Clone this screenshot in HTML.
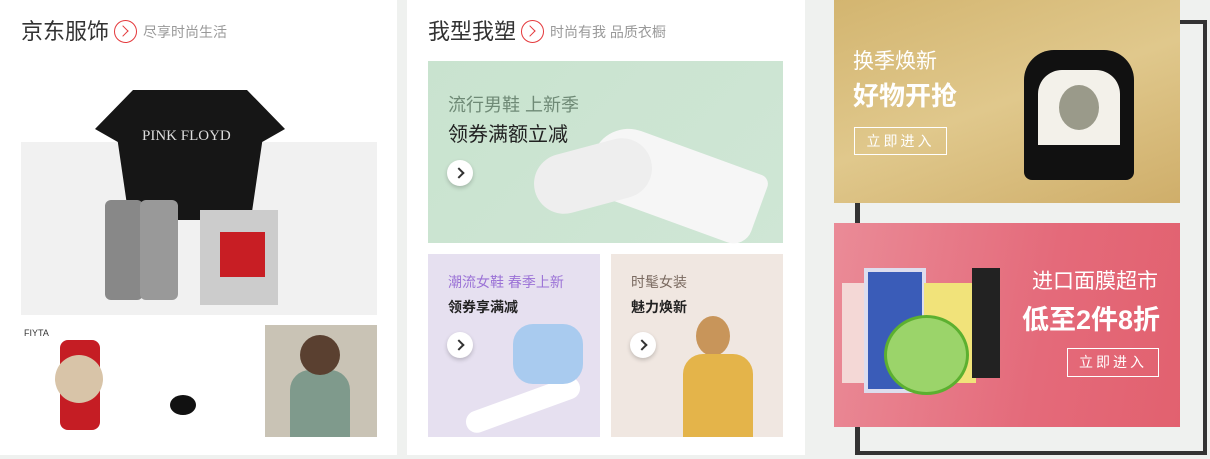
<!DOCTYPE html>
<html><head><meta charset="utf-8"><style>
*{margin:0;padding:0;box-sizing:border-box}
body{width:1210px;height:459px;background:#eff1ef;position:relative;overflow:hidden;font-family:"Liberation Sans","Noto Sans CJK SC",sans-serif}
.a{position:absolute}
.panel{position:absolute;top:0;height:455px;background:#fff}
.t{position:absolute;top:18px;font-size:22px;color:#333;white-space:nowrap;line-height:28px}
.ci{display:inline-block;width:23px;height:23px;border:1.5px solid #e4393c;border-radius:50%;vertical-align:-4px;margin:0 6px 0 5px;position:relative}
.ci:after{content:"";position:absolute;left:4px;top:6px;width:7px;height:7px;border-top:1.5px solid #e4393c;border-right:1.5px solid #e4393c;transform:rotate(45deg)}
.sub{font-size:14px;color:#999;vertical-align:2px}
.arr{position:absolute;width:26px;height:26px;border-radius:50%;background:#fff;box-shadow:0 2px 4px rgba(0,0,0,.2)}
.arr:after{content:"";position:absolute;left:8px;top:9px;width:6px;height:6px;border-top:2px solid #333;border-right:2px solid #333;transform:rotate(45deg)}
.btn{position:absolute;border:1px solid #fff;color:#fff;font-size:14px;letter-spacing:3px;text-align:center}
</style></head><body>
<div class="panel" style="left:0;width:397px">
 <div class="t" style="left:21px">京东服饰<span class="ci"></span><span class="sub">尽享时尚生活</span></div>
 <div class="a" style="left:21px;top:142px;width:356px;height:173px;background:#f1f1f1"></div>
 <div class="a" style="left:95px;top:90px;width:190px;height:130px;background:#161616;clip-path:polygon(20% 0,80% 0,100% 30%,88% 40%,82% 100%,18% 100%,12% 40%,0 30%)"></div>
 <div class="a" style="left:142px;top:128px;color:#ddd;font-family:'Liberation Serif',serif;font-size:15px">PINK FLOYD</div>
 <div class="a" style="left:105px;top:200px;width:38px;height:100px;background:#888;border-radius:6px"></div>
 <div class="a" style="left:140px;top:200px;width:38px;height:100px;background:#999;border-radius:6px"></div>
 <div class="a" style="left:200px;top:210px;width:78px;height:95px;background:#ccc"></div>
 <div class="a" style="left:220px;top:232px;width:45px;height:45px;background:#c81e24"></div>
 <div class="a" style="left:24px;top:328px;font-size:9px;color:#333">FIYTA</div>
 <div class="a" style="left:60px;top:340px;width:40px;height:90px;background:#c51d24;border-radius:8px"></div>
 <div class="a" style="left:55px;top:355px;width:48px;height:48px;background:#d8c4a8;border-radius:50%"></div>
 <div class="a" style="left:170px;top:395px;width:26px;height:20px;background:#111;border-radius:50%"></div>
 <div class="a" style="left:265px;top:325px;width:112px;height:112px;background:#c9c3b5"></div>
 <div class="a" style="left:290px;top:370px;width:60px;height:67px;background:#7f9a8c;border-radius:20px 20px 0 0"></div>
 <div class="a" style="left:300px;top:335px;width:40px;height:40px;background:#5a4030;border-radius:50%"></div>
</div>
<div class="panel" style="left:407px;width:398px">
 <div class="t" style="left:21px">我型我塑<span class="ci"></span><span class="sub">时尚有我 品质衣橱</span></div>
 <div class="a" style="left:21px;top:61px;width:355px;height:182px;background:linear-gradient(135deg,#c9e3cf,#cfe6d5)">
  <div class="a" style="left:20px;top:30px;font-size:18px;color:#6f8a76">流行男鞋 上新季</div>
  <div class="a" style="left:20px;top:57px;font-size:20px;color:#222">领券满额立减</div>
  <div class="arr" style="left:19px;top:99px"></div>
  <div class="a" style="left:160px;top:85px;width:175px;height:75px;background:#f6f6f6;border-radius:40px 10px 20px 40px;transform:rotate(20deg)"></div>
  <div class="a" style="left:105px;top:85px;width:120px;height:60px;background:#eee;border-radius:40px;transform:rotate(-15deg)"></div>
 </div>
 <div class="a" style="left:21px;top:254px;width:172px;height:183px;background:#e6e0f0">
  <div class="a" style="left:20px;top:18px;font-size:14px;color:#9b72d6">潮流女鞋 春季上新</div>
  <div class="a" style="left:20px;top:43px;font-size:14px;font-weight:bold;color:#222">领券享满减</div>
  <div class="arr" style="left:19px;top:78px"></div>
  <div class="a" style="left:35px;top:140px;width:120px;height:22px;background:#fff;border-radius:20px;transform:rotate(-20deg)"></div>
  <div class="a" style="left:85px;top:70px;width:70px;height:60px;background:#a9cbef;border-radius:20px"></div>
 </div>
 <div class="a" style="left:204px;top:254px;width:172px;height:183px;background:#f0e7e1">
  <div class="a" style="left:20px;top:18px;font-size:14px;color:#7a6a60">时髦女装</div>
  <div class="a" style="left:20px;top:43px;font-size:14px;font-weight:bold;color:#222">魅力焕新</div>
  <div class="arr" style="left:19px;top:78px"></div>
  <div class="a" style="left:85px;top:62px;width:34px;height:40px;background:#c8955a;border-radius:50%"></div>
  <div class="a" style="left:72px;top:100px;width:70px;height:83px;background:#e4b44a;border-radius:20px 20px 0 0"></div>
 </div>
</div>
<div class="a" style="left:855px;top:20px;width:352px;height:435px;border:4px solid #333;border-left-width:5px"></div>
<div class="a" style="left:834px;top:0;width:346px;height:203px;background:linear-gradient(160deg,#d3b570,#e0c88c 50%,#cfae6a)">
 <div class="a" style="left:19px;top:45px;font-size:21px;color:#fff">换季焕新</div>
 <div class="a" style="left:19px;top:76px;font-size:26px;font-weight:bold;color:#fff">好物开抢</div>
 <div class="btn" style="left:20px;top:127px;width:93px;height:28px;line-height:26px">立即进入</div>
 <div class="a" style="left:190px;top:50px;width:110px;height:130px;background:#111;border-radius:30px 30px 8px 8px"></div>
 <div class="a" style="left:204px;top:70px;width:82px;height:75px;background:#f3f1ea;border-radius:24px 24px 0 0"></div>
 <div class="a" style="left:225px;top:85px;width:40px;height:45px;background:#9a9a8a;border-radius:50%"></div>
</div>
<div class="a" style="left:834px;top:223px;width:346px;height:204px;background:linear-gradient(100deg,#ea8b97,#e46a7a 60%,#e2616f)">
 <div class="a" style="right:22px;top:42px;font-size:21px;color:#fff">进口面膜超市</div>
 <div class="a" style="right:20px;top:75px;font-size:27px;font-weight:bold;color:#fff">低至2件8折</div>
 <div class="btn" style="left:233px;top:125px;width:92px;height:29px;line-height:27px">立即进入</div>
 <div class="a" style="left:8px;top:60px;width:28px;height:100px;background:#f4d8d6"></div>
 <div class="a" style="left:30px;top:45px;width:62px;height:125px;background:#3a5cb8;border:4px solid #dde"></div>
 <div class="a" style="left:90px;top:60px;width:52px;height:100px;background:#f1e37a"></div>
 <div class="a" style="left:138px;top:45px;width:28px;height:110px;background:#222"></div>
 <div class="a" style="left:50px;top:92px;width:85px;height:80px;background:#9bd46a;border-radius:50%;border:3px solid #5cb030"></div>
</div>
</body></html>
